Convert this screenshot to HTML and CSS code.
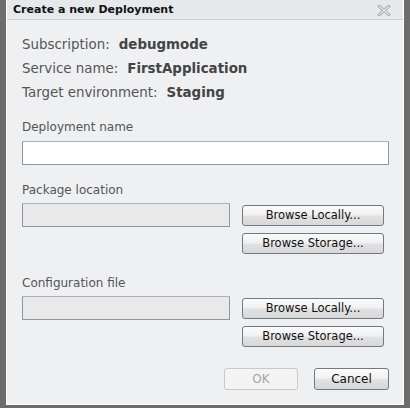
FILE: index.html
```html
<!DOCTYPE html>
<html>
<head>
<meta charset="utf-8">
<link rel="stylesheet" href="styles.css">
</head>
<body>
<div class="backdrop">
  <div class="dialog">
    <div class="titlebar">
      <span class="title">Create a new Deployment</span>
      <svg class="close" width="14" height="11" viewBox="0 0 14 11">
        <path d="M2.5 1.5 L11.5 9.5 M11.5 1.5 L2.5 9.5" stroke="#a4a4a4" stroke-width="3" stroke-linecap="square"/>
        <path d="M2.5 1.5 L11.5 9.5 M11.5 1.5 L2.5 9.5" stroke="#ececec" stroke-width="1.1" stroke-linecap="square"/>
      </svg>
    </div>
    <div class="body">
      <div class="info">
        <div class="info-row"><span class="key">Subscription:</span><span class="val">debugmode</span></div>
        <div class="info-row"><span class="key">Service name:</span><span class="val">FirstApplication</span></div>
        <div class="info-row"><span class="key">Target environment:</span><span class="val">Staging</span></div>
      </div>

      <div class="field name-field">
        <div class="label">Deployment name</div>
        <div class="input wide"></div>
      </div>

      <div class="field file-field">
        <div class="label">Package location</div>
        <div class="file-row">
          <div class="input disabled"></div>
          <div class="btn-col">
            <div class="btn browse">Browse Locally...</div>
            <div class="btn browse">Browse Storage...</div>
          </div>
        </div>
      </div>

      <div class="field file-field cfg">
        <div class="label">Configuration file</div>
        <div class="file-row">
          <div class="input disabled"></div>
          <div class="btn-col">
            <div class="btn browse">Browse Locally...</div>
            <div class="btn browse">Browse Storage...</div>
          </div>
        </div>
      </div>

      <div class="actions">
        <div class="btn action off">OK</div>
        <div class="btn action">Cancel</div>
      </div>
    </div>
  </div>
</div>
</body>
</html>
```

FILE: styles.css
```css
* { box-sizing: border-box; }
html, body { margin: 0; padding: 0; }
body {
  width: 410px;
  height: 409px;
  overflow: hidden;
  font-family: "DejaVu Sans", Verdana, sans-serif;
}
.backdrop {
  width: 410px;
  height: 409px;
  background: #6c6c6c;
  padding: 0 6px 0 6px;
}
.dialog {
  width: 398px;
  height: 406px;
  margin-top: -1px;
  border: 1px solid #ffffff;
  background: #eef0f2;
  display: flex;
  flex-direction: column;
}
.titlebar {
  height: 20px;
  background: #e6e9ec;
  border-bottom: 1px solid #cdd2d7;
  display: flex;
  align-items: center;
  justify-content: space-between;
  padding: 0 12px 0 6px;
}
.title {
  font-weight: bold;
  font-size: 11px;
  color: #111;
}
.close { display: block; margin-top: 1px; }
.body {
  padding: 13px 15px 0 15px;
  display: flex;
  flex-direction: column;
}
.info-row {
  height: 24px;
  line-height: 24px;
  font-size: 13.4px;
  color: #555;
  white-space: nowrap;
}
.key { margin-right: 9px; }
.val { font-weight: bold; color: #444; }
.field { margin-top: 13px; }
.label {
  height: 18px;
  line-height: 18px;
  font-size: 12px;
  color: #555;
  margin-bottom: 4px;
}
.name-field .label { margin-bottom: 5px; }
.input {
  height: 24px;
  border: 1px solid #8a98a6;
  border-top-color: #a7b2bd;
  border-radius: 1px;
  background: #fff;
}
.input.wide { width: 367px; }
.input.disabled { width: 208px; background: #e9e9e9; }
.file-field { margin-top: 16px; }
.file-field.cfg { margin-top: 20px; }
.file-row { display: flex; align-items: flex-start; }
.btn-col {
  margin-left: 12px;
  margin-top: 2px;
  display: flex;
  flex-direction: column;
  gap: 7px;
}
.btn {
  border: 1px solid #707a84;
  border-radius: 3px;
  background: linear-gradient(#fbfbfb, #f1f1f1 45%, #e1e1e1 55%, #d8d8d8);
  color: #111;
  font-size: 11.5px;
  text-align: center;
}
.btn.browse { width: 142px; height: 21px; line-height: 19px; }
.actions {
  margin-top: 21px;
  display: flex;
  justify-content: flex-end;
  gap: 16px;
  width: 367px;
}
.btn.action { width: 75px; height: 22px; line-height: 20px; font-size: 12px; }
.btn.action.off {
  width: 74px;
  border-color: #c9c9c9;
  background: #f4f4f4;
  color: #a3a3a3;
}
```
